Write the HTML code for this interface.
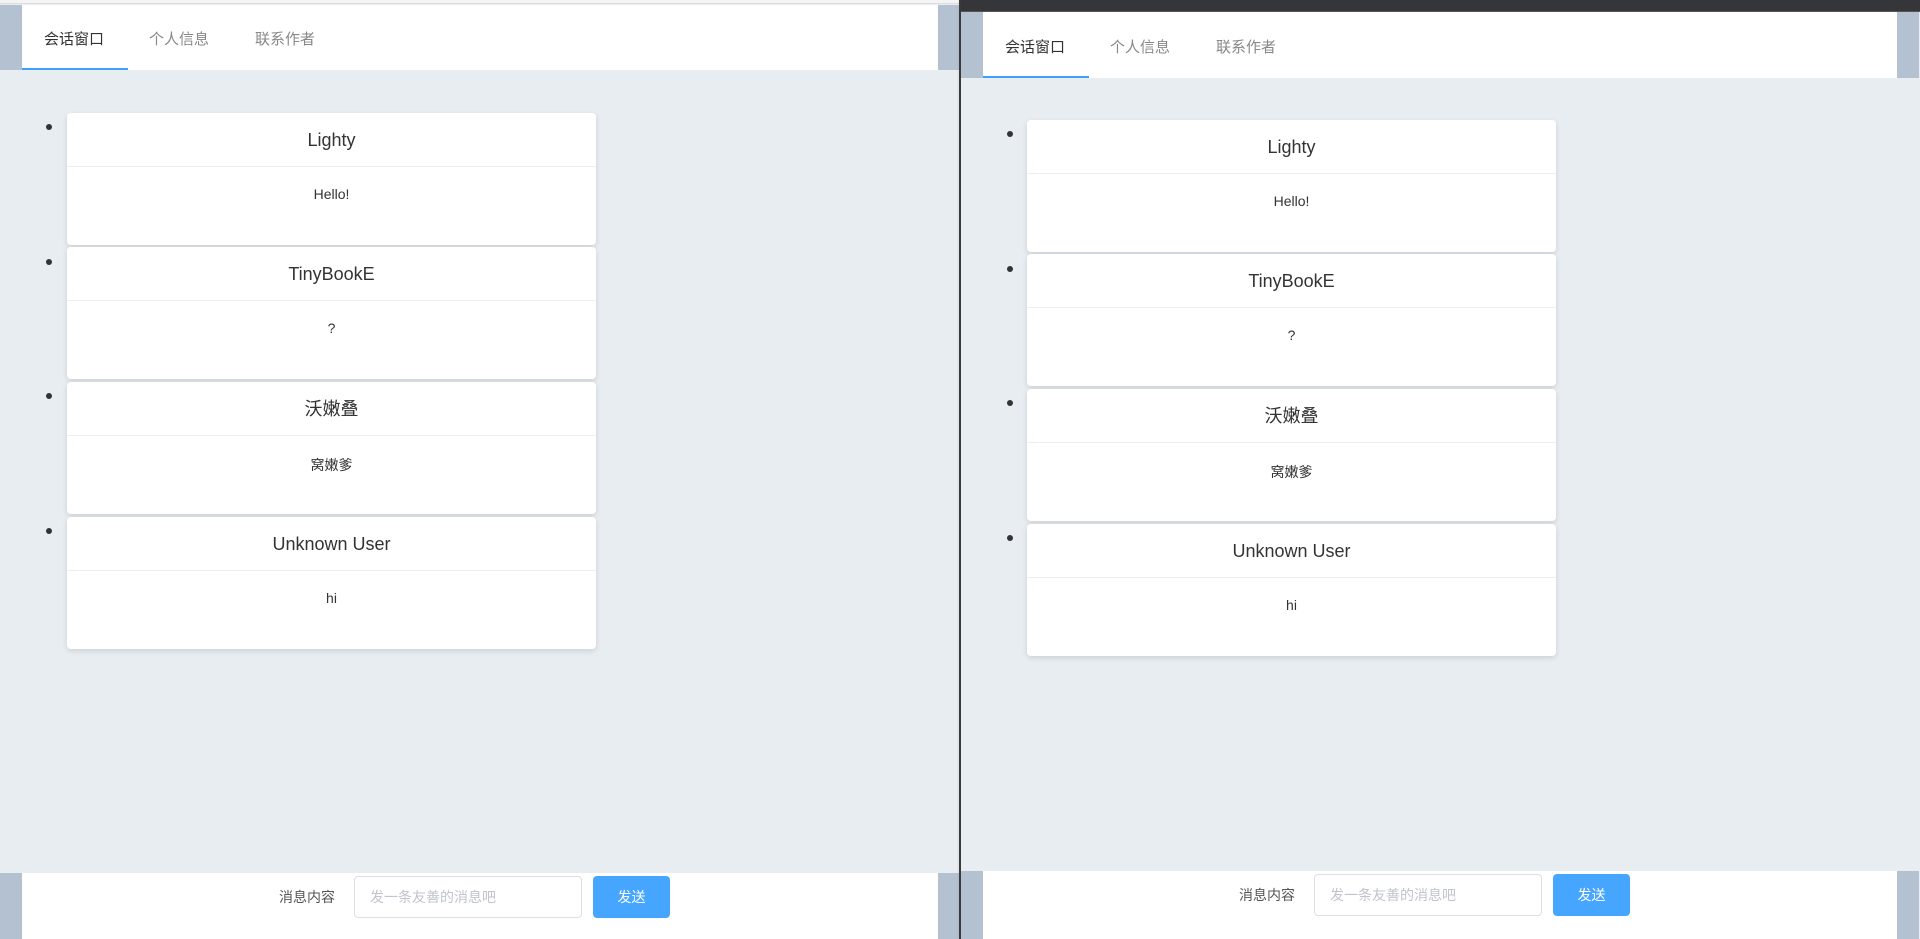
<!DOCTYPE html>
<html><head><meta charset="utf-8"><style>
*{box-sizing:border-box;margin:0;padding:0}
body{width:1920px;height:939px;overflow:hidden;background:#e8edf1;font-family:"Liberation Sans","Noto Sans CJK SC",sans-serif;position:relative}
.win{position:absolute;top:0;height:939px;background:#e8edf1;overflow:hidden}
.bar{position:absolute;background:#b3c1d1}
.hdr{position:absolute;background:#fff}
.tab{position:absolute;font-size:15px;color:#888}
.tab.a{color:#333}
.ul{position:absolute;height:2px;background:#409eff}
.card{position:absolute;width:529px;height:132px;background:#fff;border-radius:4px;box-shadow:0 2px 6px rgba(0,0,0,.12)}
.card .t{height:54px;border-bottom:1px solid #ebeef5;text-align:center;font-size:18px;line-height:54px;color:#333}
.card .b{text-align:center;font-size:14px;color:#333;padding-top:19px}
.dot{position:absolute;width:6px;height:6px;border-radius:50%;background:#333}
.lbl{position:absolute;font-size:14px;color:#555}
.inp{position:absolute;width:228px;height:42px;border:1px solid #dcdfe6;border-radius:4px;font-size:14px;color:#c0c4cc;line-height:40px;padding-left:15px;background:#fff}
.btn{position:absolute;width:77px;height:42px;background:#46a6ff;border-radius:4px;color:#fff;font-size:14px;text-align:center;line-height:42px}
</style></head><body>

<!-- left window -->
<div class="win" style="left:0;width:960px">
  <div style="position:absolute;left:0;top:0;width:960px;height:4px;background:#f4f4f4;border-bottom:1px solid #ddd"></div>
  <div class="bar" style="left:0;top:5px;width:22px;height:934px"></div>
  <div class="bar" style="left:938px;top:5px;width:22px;height:934px"></div>
  <div class="hdr" style="left:22px;top:5px;width:916px;height:65px"></div>
  <div class="tab a" style="left:44px;top:28px">会话窗口</div>
  <div class="tab" style="left:149px;top:28px">个人信息</div>
  <div class="tab" style="left:255px;top:28px">联系作者</div>
  <div class="ul" style="left:22px;top:68px;width:106px"></div>
  <div style="position:absolute;left:0;top:70px;width:960px;height:803px;background:#e8edf1"></div>
  <div class="dot" style="left:46px;top:124px"></div><div class="card" style="left:67px;top:113px"><div class="t">Lighty</div><div class="b">Hello!</div></div>
  <div class="dot" style="left:46px;top:259px"></div><div class="card" style="left:67px;top:247px"><div class="t">TinyBookE</div><div class="b">?</div></div>
  <div class="dot" style="left:46px;top:393px"></div><div class="card" style="left:67px;top:382px"><div class="t">沃嫩叠</div><div class="b">窝嫩爹</div></div>
  <div class="dot" style="left:46px;top:528px"></div><div class="card" style="left:67px;top:517px"><div class="t">Unknown User</div><div class="b">hi</div></div>
  <div class="hdr" style="left:22px;top:873px;width:916px;height:66px"></div>
  <div class="lbl" style="left:279px;top:887px">消息内容</div>
  <div class="inp" style="left:354px;top:876px">发一条友善的消息吧</div>
  <div class="btn" style="left:593px;top:876px">发送</div>
</div>
<div style="position:absolute;left:959px;top:0;width:2px;height:939px;background:#3a3a3a;box-shadow:2px 0 4px rgba(0,0,0,.35)"></div>

<!-- right window -->
<div class="win" style="left:961px;width:959px">
  <div style="position:absolute;left:0;top:0;width:959px;height:12px;background:#35363a;border-bottom:1px solid #555"></div>
  <div class="bar" style="left:0;top:12px;width:22px;height:927px"></div>
  <div class="bar" style="left:936px;top:12px;width:22px;height:927px"></div>
  <div class="hdr" style="left:22px;top:12px;width:914px;height:66px"></div>
  <div class="tab a" style="left:44px;top:36px">会话窗口</div>
  <div class="tab" style="left:149px;top:36px">个人信息</div>
  <div class="tab" style="left:255px;top:36px">联系作者</div>
  <div class="ul" style="left:22px;top:76px;width:106px"></div>
  <div style="position:absolute;left:0;top:78px;width:958px;height:793px;background:#e8edf1"></div>
  <div class="dot" style="left:46px;top:131px"></div><div class="card" style="left:66px;top:120px"><div class="t">Lighty</div><div class="b">Hello!</div></div>
  <div class="dot" style="left:46px;top:266px"></div><div class="card" style="left:66px;top:254px"><div class="t">TinyBookE</div><div class="b">?</div></div>
  <div class="dot" style="left:46px;top:400px"></div><div class="card" style="left:66px;top:389px"><div class="t">沃嫩叠</div><div class="b">窝嫩爹</div></div>
  <div class="dot" style="left:46px;top:535px"></div><div class="card" style="left:66px;top:524px"><div class="t">Unknown User</div><div class="b">hi</div></div>
  <div class="hdr" style="left:22px;top:871px;width:914px;height:68px"></div>
  <div class="lbl" style="left:278px;top:885px">消息内容</div>
  <div class="inp" style="left:353px;top:874px">发一条友善的消息吧</div>
  <div class="btn" style="left:592px;top:874px">发送</div>
</div>
</body></html>
